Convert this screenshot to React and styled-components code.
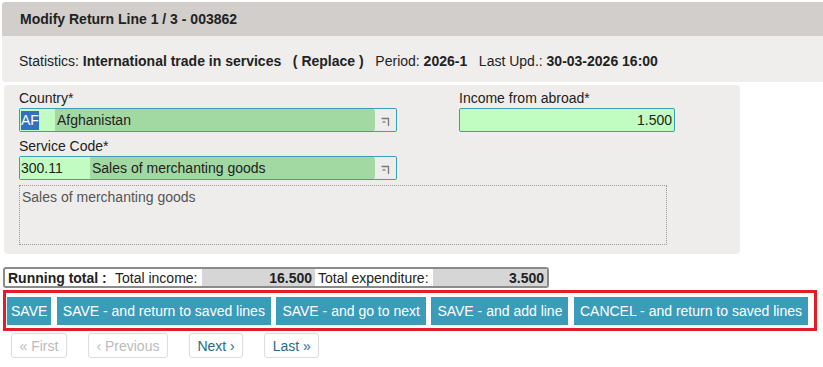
import React from "react";
import styled, { createGlobalStyle } from "styled-components";

const Global = createGlobalStyle`
  html, body { margin: 0; padding: 0; background: #fff; }
  body { font-family: "Liberation Sans", Arial, sans-serif; font-size: 14px; color: #222; }
  * { box-sizing: border-box; }
`;

const Page = styled.div`
  width: 823px;
  padding: 2px 0 0 2px;
`;

const Header = styled.div`
  background: #d1cecb;
  height: 34px;
  display: flex;
  align-items: center;
  padding-left: 18px;
  font-weight: bold;
  font-size: 14px;
  color: #222;
  border-radius: 3px 0 0 0;
`;

const Stats = styled.div`
  background: #efeeed;
  height: 46px;
  display: flex;
  align-items: center;
  padding: 4px 0 0 17px;
  font-size: 14px;
  border-radius: 0 0 0 3px;
  white-space: pre;
`;

const B = styled.b`
  font-weight: bold;
`;

const Panel = styled.div`
  margin: 3px 0 0 2px;
  width: 736px;
  height: 169px;
  background: #eeedeb;
  border-radius: 4px;
  padding: 3px 0 0 15px;
  display: grid;
  grid-template-columns: 440px 220px;
  align-content: start;
`;

const Field = styled.div`
  display: flex;
  flex-direction: column;
  padding-top: ${p => p.$pt || 0}px;
`;

const Label = styled.div`
  font-size: 14px;
  height: 20px;
  line-height: 20px;
  color: #222;
`;

const Lookup = styled.div`
  width: 378px;
  height: 24px;
  border: 1px solid #3a9fb1;
  border-radius: 2px;
  display: flex;
  align-items: stretch;
  background: #eeedeb;
`;

const Code = styled.div`
  width: ${p => p.$w}px;
  background: #c3fcc3;
  display: flex;
  align-items: center;
  padding-left: 1px;
`;

const Sel = styled.span`
  background: #3470c0;
  color: #fff;
  padding: 1px 0;
  line-height: 17px;
`;

const Name = styled.div`
  flex: 1;
  background: #a2d8a1;
  display: flex;
  align-items: center;
  padding-left: 2px;
  border-radius: 0 2px 2px 0;
`;

const Btn = styled.div`
  width: 21px;
  display: flex;
  align-items: center;
  justify-content: center;
  padding-top: 2px;
`;

const Amount = styled.div`
  width: 216px;
  height: 24px;
  border: 1px solid #3a9fb1;
  border-radius: 2px;
  background: #c1fdc1;
  display: flex;
  align-items: center;
  justify-content: flex-end;
  padding-right: 2px;
`;

const Desc = styled.div`
  grid-column: 1 / span 2;
  margin-top: 5px;
  width: 648px;
  height: 60px;
  border: 1px dotted #999;
  padding: 3px 2px;
  color: #555;
  font-size: 14px;
`;

const Total = styled.div`
  margin: 13px 0 0 1px;
  width: 546px;
  height: 21px;
  border: 2px solid #8a8a8a;
  border-radius: 3px;
  display: flex;
  align-items: stretch;
  font-size: 14px;
  background: #fff;
`;

const TLabel = styled.div`
  display: flex;
  align-items: center;
  padding: 0 4px 0 ${p => p.$pl || 3}px;
  width: ${p => p.$w}px;
  font-weight: ${p => (p.$bold ? "bold" : "normal")};
  white-space: pre;
`;

const TValue = styled.div`
  width: ${p => p.$w}px;
  background: #d6d6d6;
  display: flex;
  align-items: center;
  justify-content: flex-end;
  padding-right: 3px;
  font-weight: bold;
`;

const Actions = styled.div`
  margin: 2px 0 0 1px;
  width: 814px;
  height: 41px;
  border: 3px solid #e31d27;
  display: flex;
  align-items: center;
  gap: 5.5px;
  padding-left: 1px;
`;

const ActionBtn = styled.div`
  height: 28px;
  background: #3b9cba;
  color: #fff;
  font-size: 14px;
  display: flex;
  align-items: center;
  padding: 0 ${p => p.$px || 6}px;
  white-space: pre;
`;

const Pager = styled.div`
  display: flex;
  gap: 21px;
  margin: 2px 0 0 9px;
`;

const PageBtn = styled.div`
  height: 25px;
  border: 1px solid #ddd;
  border-radius: 3px;
  padding: 0 7.5px;
  display: flex;
  align-items: center;
  font-size: 14px;
  color: ${p => (p.$disabled ? "#bbb" : "#2a6a87")};
  background: #fff;
`;

const LookupIcon = () => (
  <svg width="11" height="11" viewBox="0 0 11 11">
    <path d="M1.5 2.5 H8.5 V10" fill="none" stroke="#7a7a7a" strokeWidth="1.3" />
    <path d="M2.5 6 H5.5" fill="none" stroke="#7a7a7a" strokeWidth="1.3" />
  </svg>
);

export default function App() {
  return (
    <>
      <Global />
      <Page>
        <Header>Modify Return Line 1 / 3 - 003862</Header>
        <Stats>
          Statistics: <B>International trade in services   ( Replace )</B>   Period: <B>2026-1</B>   Last Upd.: <B>30-03-2026 16:00</B>
        </Stats>
        <Panel>
          <Field>
            <Label>Country*</Label>
            <Lookup>
              <Code $w={35}><Sel>AF</Sel></Code>
              <Name>Afghanistan</Name>
              <Btn><LookupIcon /></Btn>
            </Lookup>
          </Field>
          <Field>
            <Label>Income from abroad*</Label>
            <Amount>1.500</Amount>
          </Field>
          <Field $pt={4}>
            <Label>Service Code*</Label>
            <Lookup>
              <Code $w={70}>300.11</Code>
              <Name>Sales of merchanting goods</Name>
              <Btn><LookupIcon /></Btn>
            </Lookup>
          </Field>
          <div />
          <Desc>Sales of merchanting goods</Desc>
        </Panel>
        <Total>
          <TLabel $bold $w={107}>Running total :</TLabel>
          <TLabel $w={90} $pl={3}>Total income:</TLabel>
          <TValue $w={113}>16.500</TValue>
          <TLabel $w={118} $pl={3}>Total expenditure:</TLabel>
          <TValue $w={114}>3.500</TValue>
        </Total>
        <Actions>
          <ActionBtn $px={4}>SAVE</ActionBtn>
          <ActionBtn>SAVE - and return to saved lines</ActionBtn>
          <ActionBtn>SAVE - and go to next</ActionBtn>
          <ActionBtn>SAVE - and add line</ActionBtn>
          <ActionBtn>CANCEL - and return to saved lines</ActionBtn>
        </Actions>
        <Pager>
          <PageBtn $disabled>« First</PageBtn>
          <PageBtn $disabled>‹ Previous</PageBtn>
          <PageBtn>Next ›</PageBtn>
          <PageBtn>Last »</PageBtn>
        </Pager>
      </Page>
    </>
  );
}
